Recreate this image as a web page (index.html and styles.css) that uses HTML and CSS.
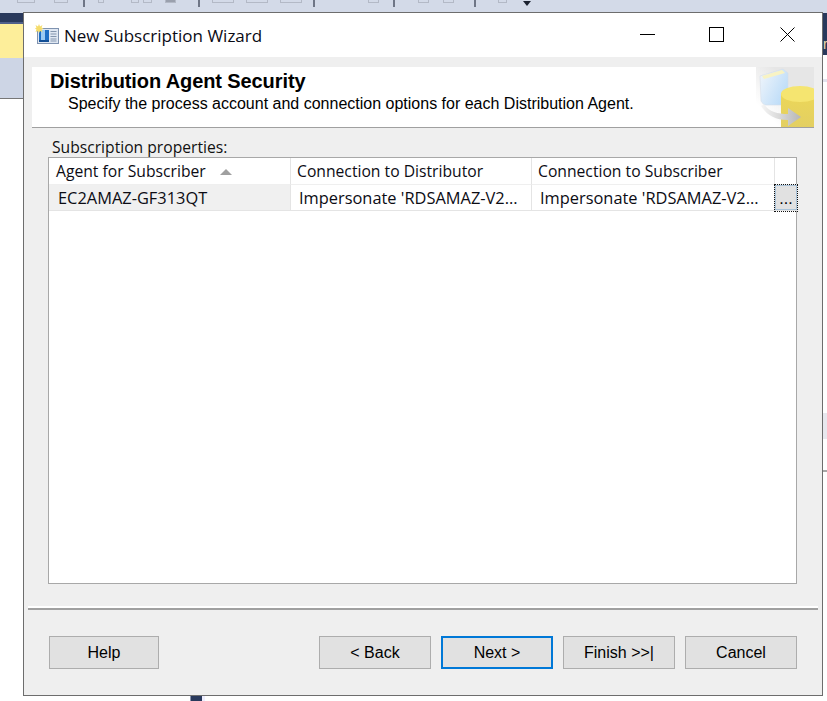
FILE: index.html
```html
<!DOCTYPE html>
<html lang="en">
<head>
<meta charset="utf-8">
<title>New Subscription Wizard</title>
<link rel="stylesheet" href="styles.css">
</head>
<body>
<div class="desktop">
  <div class="bg-toolbar">
    <span class="tb-sep s1"></span><span class="tb-sep s2"></span><span class="tb-sep s3"></span><span class="tb-sep s4"></span><span class="tb-sep s5"></span>
    <span class="tb-btn b1"></span><span class="tb-btn b2"></span><span class="tb-btn b3"></span><span class="tb-btn b4"></span><span class="tb-btn b5"></span><span class="tb-btn b6"></span><span class="tb-btn b7"></span><span class="tb-btn b8"></span><span class="tb-btn b9"></span><span class="tb-btn b10"></span><span class="tb-btn b11"></span><span class="tb-btn b12"></span><span class="tb-btn b13"></span>
    <span class="tb-arrow"></span>
  </div>
  <div class="bg-left-nav"></div>
  <div class="bg-left-yellow"></div>
  <div class="bg-left-gray"></div>
  <div class="bg-right-nav"><span class="bg-right-glyph">r</span></div>
  <div class="bg-right-strip"></div>
  <div class="bg-right-block"></div>
  <div class="bg-right-line"></div>
  <div class="bg-pillar"></div>

  <section class="window">
    <header class="titlebar">
      <svg class="app-icon" width="24" height="20" viewBox="0 0 24 20" aria-hidden="true">
        <rect x="2.500" y="4.500" width="21" height="15" fill="#dfe7f2" stroke="#7f93b0"/>
        <rect x="4" y="6" width="10" height="12" fill="#1f6fc4"/>
        <rect x="6" y="6" width="4" height="10" fill="#9ccbf2"/>
        <rect x="4" y="16" width="10" height="2" fill="#134f96"/>
        <path d="M15.500 7.500h6M15.500 10h6M15.500 12.500h6M15.500 15h6M15.500 17h6" stroke="#8496ae" stroke-width="1.200"/>
        <path d="M4 0l1 2.500L7.500 1 6.500 3.500 8.500 4.500 6.500 5.500 7.500 8 5 7 4 9 3 7 .5 8 1.500 5.500 0 4.500 1.500 3.500 .5 1 3 2.500z" fill="#f5dc6a"/>
      </svg>
      <h1 class="title">New Subscription Wizard</h1>
      <div class="controls">
        <svg class="ctl" width="15" height="15" viewBox="0 0 15 15" aria-hidden="true"><path d="M0 7.500h15" stroke="#000" fill="none"/></svg>
        <svg class="ctl ctl-max" width="15" height="15" viewBox="0 0 15 15" aria-hidden="true"><rect x=".5" y=".5" width="14" height="14" stroke="#000" fill="none"/></svg>
        <svg class="ctl" width="15" height="15" viewBox="0 0 15 15" aria-hidden="true"><path d="M.5.500l14 14M14.500.500l-14 14" stroke="#000" fill="none"/></svg>
      </div>
    </header>

    <div class="body">
      <div class="banner">
        <div class="banner-text">
          <h2 class="banner-title">Distribution Agent Security</h2>
          <p class="banner-sub">Specify the process account and connection options for each Distribution Agent.</p>
        </div>
        <svg class="banner-art" width="58" height="60" viewBox="0 0 58 60" aria-hidden="true">
          <defs>
            <linearGradient id="artbg" x1="0" y1="1" x2="1" y2="0"><stop offset=".2" stop-color="#fff"/><stop offset=".65" stop-color="#e6e6e6"/></linearGradient>
            <linearGradient id="book" x1="0" y1="0" x2="1" y2=".6"><stop offset="0" stop-color="#f2f6fb"/><stop offset="1" stop-color="#bcdcf8"/></linearGradient>
            <linearGradient id="can" x1="0" y1="0" x2="0" y2="1"><stop offset="0" stop-color="#ecd758"/><stop offset="1" stop-color="#e3cf62"/></linearGradient>
            <linearGradient id="arrow" x1="0" y1="0" x2="1" y2="0"><stop offset="0" stop-color="#f6f6f6"/><stop offset="1" stop-color="#b6b6b6"/></linearGradient>
          </defs>
          <rect width="58" height="60" fill="url(#artbg)"/>
          <path d="M4 9L27 2 32 6 32 26 25 38 8 38 5 34z" fill="url(#book)" stroke="#d5deea" stroke-width=".6"/>
          <path d="M6 9L26 3 29 6 8 12z" fill="#f8f3c4"/>
          <path d="M25 26h33v34H25z" fill="url(#can)"/>
          <ellipse cx="44" cy="27" rx="19" ry="8" fill="#f5e570"/>
          <path d="M8 37c5 8 14 10 24 10v-6l13 9-13 9v-6c-13 0-21-5-27-14z" fill="url(#arrow)"/>
        </svg>
      </div>

      <div class="props-label">Subscription properties:</div>

      <div class="grid" role="table">
        <div class="row row-head" role="row">
          <div class="cell col1" role="columnheader">Agent for Subscriber<span class="sort"></span></div>
          <div class="cell col2" role="columnheader">Connection to Distributor</div>
          <div class="cell col3" role="columnheader">Connection to Subscriber</div>
          <div class="cell col4" role="columnheader"></div>
        </div>
        <div class="row row-data" role="row">
          <div class="cell col1 cell-first" role="cell">EC2AMAZ-GF313QT</div>
          <div class="cell col2 cell-val" role="cell">Impersonate 'RDSAMAZ-V2...</div>
          <div class="cell col3 cell-val" role="cell">Impersonate 'RDSAMAZ-V2...</div>
          <div class="cell col4 cell-btn" role="cell"><span class="ellipsis">...</span></div>
        </div>
      </div>

      <div class="divider"></div>

      <div class="buttons">
        <button class="btn btn-help" type="button">Help</button>
        <div class="btn-group">
          <button class="btn" type="button">&lt; Back</button>
          <button class="btn btn-default" type="button">Next &gt;</button>
          <button class="btn" type="button">Finish &gt;&gt;|</button>
          <button class="btn" type="button">Cancel</button>
        </div>
      </div>
    </div>
  </section>
</div>
</body>
</html>
```

FILE: styles.css
```css
* { box-sizing: border-box; }
html, body { margin: 0; padding: 0; }
body { background: #fff; overflow: hidden; }
.desktop { position: relative; width: 827px; height: 701px; overflow: hidden; background: #fff; }

.bg-toolbar { position: absolute; left: 0; top: 0; width: 827px; height: 13px; background: #d3dae8; }
.tb-sep { position: absolute; top: 0; width: 2px; height: 7px; background: #6f7686; }
.s1 { left: 83px; } .s2 { left: 198px; } .s3 { left: 313px; } .s4 { left: 393px; } .s5 { left: 474px; }
.tb-btn { position: absolute; top: 0; height: 3px; border: 1px solid #b3b9c6; border-top: 0; }
.b1 { left: 17px; width: 18px; } .b2 { left: 54px; width: 14px; } .b3 { left: 98px; width: 6px; }
.b4 { left: 131px; width: 8px; } .b5 { left: 143px; width: 9px; } .b6 { left: 165px; width: 11px; background: #9aa0ad; }
.b7 { left: 212px; width: 22px; } .b8 { left: 246px; width: 22px; } .b9 { left: 280px; width: 22px; }
.b10 { left: 368px; width: 11px; } .b11 { left: 418px; width: 11px; } .b12 { left: 443px; width: 11px; } .b13 { left: 498px; width: 9px; }
.tb-arrow { position: absolute; left: 523px; top: 1px; width: 0; height: 0; border-left: 4px solid transparent; border-right: 4px solid transparent; border-top: 5px solid #1c2230; }

.bg-left-nav { position: absolute; left: 0; top: 13px; width: 23px; height: 11px; background: #29395c; border-bottom: 2px solid #4f5f8a; }
.bg-left-yellow { position: absolute; left: 0; top: 24px; width: 23px; height: 34px; background: #fdee9a; }
.bg-left-gray { position: absolute; left: 0; top: 58px; width: 23px; height: 41px; background: #cdd5e5; border-bottom: 1px solid #777; }
.bg-right-nav { position: absolute; left: 823px; top: 13px; width: 4px; height: 42px; background: #29395c; overflow: hidden; }
.bg-right-glyph { display: block; margin-top: 23px; color: #f0d9a8; font: 14px "Liberation Sans", sans-serif; }
.bg-right-strip { position: absolute; left: 823px; top: 79px; width: 4px; height: 3px; background: #e2e2ee; }
.bg-right-block { position: absolute; left: 823px; top: 413px; width: 4px; height: 26px; background: #e8e8ee; }
.bg-right-line { position: absolute; left: 823px; top: 470px; width: 4px; height: 2px; background: #a8a8a8; }
.bg-pillar { position: absolute; left: 190px; top: 696px; width: 15px; height: 5px; background: #29395c; border-left: 1px solid #8a94ad; border-right: 3px solid #eef; }

.window { position: absolute; left: 23px; top: 12px; width: 800px; height: 684px; display: flex; flex-direction: column; border: 1px solid #6d6d6d; background: #efefef; }

.titlebar { height: 44px; flex: none; display: flex; align-items: center; background: #fff; padding-left: 11px; }
.app-icon { flex: none; margin-top: -2px; }
.title { margin: 0 0 0 5px; font: 400 17px "Open Sans", sans-serif; color: #0a0a14; white-space: nowrap; }
.controls { margin-left: auto; display: flex; align-items: center; padding: 0 27px 2px 0; }
.ctl { display: block; margin-left: 56px; }
.ctl.ctl-max { margin-left: 54px; }

.body { flex: 1; display: flex; flex-direction: column; padding: 10px 8px 0; min-height: 0; }
.banner { height: 61px; flex: none; display: flex; justify-content: space-between; background: #fff; border-bottom: 1px solid #a0a0a0; }
.banner-text { padding: 3px 0 0 18px; }
.banner-title { margin: 0; font: 700 20px/23px "Liberation Sans", sans-serif; color: #000; letter-spacing: -0.1px; }
.banner-sub { margin: 2px 0 0 18px; font: 16px/17px "Liberation Sans", sans-serif; color: #000; }
.banner-art { flex: none; display: block; }

.props-label { margin: 11px 0 0 20px; font: 15.660px/17px "Open Sans", sans-serif; color: #111; height: 18px; }
.grid { margin: 0 17px 0 16px; height: 427px; flex: none; background: #fff; border: 1px solid #a8a8a8; }
.row { display: grid; grid-template-columns: 242px 241px 243px 22px; }
.row-head { height: 27px; }
.row-data { height: 26px; }
.cell { font: 15.700px/27px "Open Sans", sans-serif; color: #0c0c14; white-space: nowrap; overflow: hidden; border-right: 1px solid #e4e4e4; }
.row-head .cell { padding-left: 6px; border-bottom: 1px solid #efefef; }
.row-head .col1 { padding-left: 7px; }
.row-data .cell { font-size: 16.400px; border-bottom: 1px solid #e4e4e4; line-height: 25px; }
.sort { display: inline-block; width: 0; height: 0; margin-left: 14px; vertical-align: 2px; border-left: 6px solid transparent; border-right: 6px solid transparent; border-bottom: 6px solid #a0a0a0; }
.row-data .cell-first { background: #f0f0f0; padding-left: 9px; }
.row-data .cell-val { padding-left: 8px; }
.row .col4 { border-right: 0; }
.row-data .cell-btn { background: #e1e1e1; outline: 1px dotted #111; box-shadow: inset 0 0 0 1px #a9c3d9; overflow: hidden; }
.ellipsis { display: block; text-align: center; font: 16px/27px "Liberation Sans", sans-serif; color: #000; }

.divider { margin: 22px -4px 0 -4px; height: 4px; flex: none; background: #a0a0a0; border-top: 2px solid #fff; }

.buttons { margin: 26px 17px 0 17px; display: flex; justify-content: space-between; }
.btn-group { display: flex; gap: 10px; }
.btn { width: 112px; height: 33px; padding: 0; background: #e1e1e1; border: 1px solid #adadad; border-radius: 0; font: 16px "Liberation Sans", sans-serif; color: #000; }
.btn-help { width: 110px; }
.btn-default { border: 2px solid #0078d7; }
```
